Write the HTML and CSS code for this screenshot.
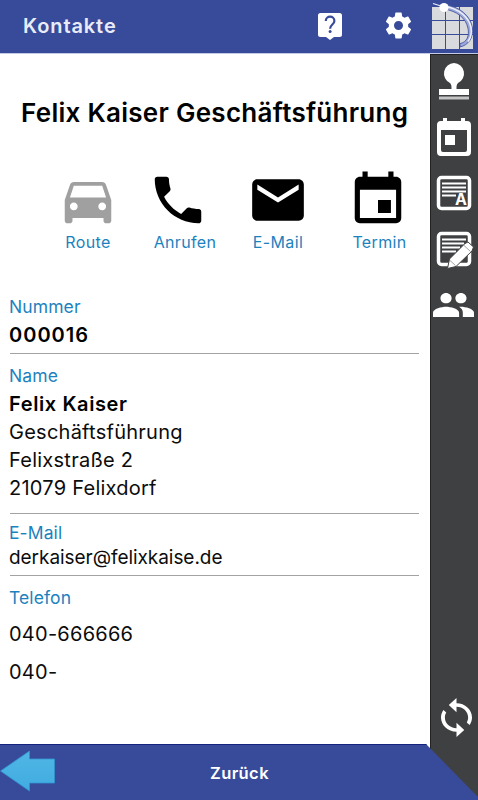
FILE: index.html
```html
<!DOCTYPE html>
<html lang="de">
<head>
  <meta charset="UTF-8" />
  <meta name="viewport" content="width=device-width, initial-scale=1" />
  <title>Kontakte</title>
  <link rel="stylesheet" href="styles.css">
</head>
<body>
  <div class="app">
    <header class="topbar">
      <span class="topbar-title">Kontakte</span>
      <svg class="icon-help" viewBox="0 0 24 27">
        <path fill="#fff" d="M2.500 0h19A2.500 2.500 0 0 1 24 2.500v19a2.500 2.500 0 0 1-2.500 2.500H16l-4 3-4-3H2.500A2.500 2.500 0 0 1 0 21.500v-19A2.500 2.500 0 0 1 2.500 0z"/>
        <path fill="none" stroke="#384b9b" stroke-width="2.200" d="M7.800 8c0-5.800 8.600-5.800 8.600 0 0 3.500-4.300 3.700-4.300 7.700"/>
        <circle cx="12.100" cy="18.600" r="1.500" fill="#384b9b"/>
      </svg>
      <svg class="icon-gear" viewBox="0 0 24 24">
        <path fill="#fff" d="M19.430 12.980c.04-.32.07-.64.07-.98s-.03-.66-.07-.98l2.110-1.650c.19-.15.24-.42.12-.64l-2-3.460c-.12-.22-.39-.3-.61-.22l-2.490 1c-.52-.4-1.080-.73-1.690-.98l-.38-2.650C14.460 2.180 14.250 2 14 2h-4c-.25 0-.46.18-.49.42l-.38 2.650c-.61.25-1.170.59-1.690.98l-2.490-1c-.23-.09-.49 0-.61.22l-2 3.460c-.13.22-.07.49.12.64l2.110 1.650c-.04.32-.07.65-.07.98s.03.66.07.98l-2.110 1.650c-.19.15-.24.42-.12.64l2 3.460c.12.22.39.3.61.22l2.490-1c.52.4 1.080.73 1.690.98l.38 2.650c.03.24.24.42.49.42h4c.25 0 .46-.18.49-.42l.38-2.650c.61-.25 1.170-.59 1.690-.98l2.490 1c.23.09.49 0 .61-.22l2-3.460c.12-.22.07-.49-.12-.64l-2.110-1.650zM12 15.500c-1.930 0-3.500-1.570-3.500-3.500s1.570-3.500 3.500-3.500 3.500 1.570 3.500 3.500-1.570 3.500-3.500 3.500z"/>
      </svg>
      <svg class="logo" viewBox="0 0 46 50">
        <path fill="#d9dadd" d="M2 7h13v13H2zM16 7h13v13H16zM30 7h13v13H30zM2 21h13v13H2zM16 21h13v13H16zM30 21h13v13H30zM2 35h13v14H2zM16 35h13v14H16zM30 35h13v14H30z"/>
        <path fill="#9fa9d8" stroke="#384b9b" stroke-width=".8" d="M15 5c14 1 26 11 27.500 23 1 10-4 17-12.500 19v-3.500c7-1 9.500-8 8-15C36 18 27 11 14 9z"/>
        <path fill="none" stroke="#eceefa" stroke-width="1.600" d="M15 6.500c14 2 24 11 26 21 1 6 0 10-3 14"/>
        <path stroke="#eceefa" stroke-width="1.200" d="M3 3.500l11 3.500"/>
        <circle cx="14" cy="7.500" r="4.600" fill="#fff"/>
      </svg>
    </header>

    <main class="content">
      <h1>Felix Kaiser Geschäftsführung</h1>

      <div class="actions">
        <div class="action route">
          <svg viewBox="0 0 24 24"><path d="M18.920 6.010C18.720 5.420 18.160 5 17.500 5h-11c-.66 0-1.210.42-1.420 1.010L3 12v8c0 .55.45 1 1 1h1c.55 0 1-.45 1-1v-1h12v1c0 .55.45 1 1 1h1c.55 0 1-.45 1-1v-8l-2.080-5.990zM6.500 16c-.83 0-1.500-.67-1.500-1.500S5.670 13 6.500 13s1.500.67 1.500 1.500S7.330 16 6.500 16zm11 0c-.83 0-1.500-.67-1.500-1.500s.67-1.500 1.500-1.500 1.500.67 1.500 1.500-.67 1.500-1.500 1.500zM5 11l1.500-4.500h11L19 11H5z"/></svg>
          <span>Route</span>
        </div>
        <div class="action call">
          <svg viewBox="0 0 24 24"><path d="M6.620 10.790c1.440 2.830 3.760 5.140 6.590 6.590l2.200-2.200c.27-.27.67-.36 1.020-.24 1.120.37 2.330.57 3.570.57.55 0 1 .45 1 1V20c0 .55-.45 1-1 1-9.390 0-17-7.610-17-17 0-.55.45-1 1-1h3.500c.55 0 1 .45 1 1 0 1.250.2 2.450.57 3.570.11.35.03.74-.25 1.020l-2.200 2.200z"/></svg>
          <span>Anrufen</span>
        </div>
        <div class="action mail">
          <svg viewBox="0 0 24 24"><path d="M20 4H4c-1.100 0-1.990.9-1.990 2L2 18c0 1.100.9 2 2 2h16c1.100 0 2-.9 2-2V6c0-1.100-.9-2-2-2zm0 4l-8 5-8-5V6l8 5 8-5v2z"/></svg>
          <span>E-Mail</span>
        </div>
        <div class="action date">
          <svg viewBox="0 0 24 24"><path d="M17 12h-5v5h5v-5zM16 1v2H8V1H6v2H5c-1.110 0-1.990.9-1.990 2L3 19c0 1.100.89 2 2 2h14c1.100 0 2-.9 2-2V5c0-1.100-.9-2-2-2h-1V1h-2zm3 18H5V8h14v11z"/></svg>
          <span>Termin</span>
        </div>
      </div>

      <section class="field number">
        <h2>Nummer</h2>
        <p class="strong">000016</p>
      </section>
      <section class="field name">
        <h2>Name</h2>
        <p class="strong">Felix Kaiser</p>
        <p>Geschäftsführung</p>
        <p>Felixstraße 2</p>
        <p>21079 Felixdorf</p>
      </section>
      <section class="field email">
        <h2>E-Mail</h2>
        <p>derkaiser@felixkaise.de</p>
      </section>
      <section class="field phone">
        <h2>Telefon</h2>
        <p>040-666666</p>
        <p>040-</p>
      </section>
    </main>

    <nav class="sidebar">
      <svg class="stamp" viewBox="0 0 34 40">
        <path fill="#fff" d="M17 1a10.500 10.500 0 0 1 4 20c-1.500 1.500-1.500 3-1.500 6H32v6H2v-6h12.500c0-3 0-4.500-1.500-6A10.500 10.500 0 0 1 17 1z"/>
        <path fill="#c4c4c4" d="M2 34.500h30v3H2z"/>
      </svg>
      <svg class="calendar" viewBox="0 0 36 40">
        <path fill="#fff" fill-rule="evenodd" d="M7 1h4v3h14V1h4v3h2a4 4 0 0 1 4 4v27a4 4 0 0 1-4 4H5a4 4 0 0 1-4-4V8a4 4 0 0 1 4-4h2zM5 13v20a2 2 0 0 0 2 2h22a2 2 0 0 0 2-2V13zM9 18h10v10H9z"/>
      </svg>
      <svg class="note" viewBox="0 0 36 36">
        <rect x="2.500" y="2.500" width="31" height="31" rx="3" fill="none" stroke="#fff" stroke-width="3.500"/>
        <path fill="none" stroke="#fff" stroke-width="1.800" d="M6 8.500h24M6 12.500h24M6 16.500h24M6 20.500h14"/>
        <text x="25" y="30" text-anchor="middle" class="note-letter">A</text>
      </svg>
      <svg class="edit" viewBox="0 0 38 39">
        <rect x="2.500" y="2.500" width="31" height="31" rx="3" fill="none" stroke="#fff" stroke-width="3.500"/>
        <path fill="none" stroke="#fff" stroke-width="1.800" d="M6 8.500h24M6 12.500h22M6 16.500h18M6 20.500h14"/>
        <path fill="#fff" stroke="#3f4042" stroke-width="1" d="M11.500 37.500l2-9.500L29 12.500l3-1.500 5.500 5-1.500 4-16 15.500z"/>
        <path stroke="#8a8a8c" stroke-width=".8" d="M28 14.500l6.500 6M14 29.500l5.500 5"/>
      </svg>
      <svg class="people" viewBox="1 5 22 14" preserveAspectRatio="none">
        <path fill="#fff" d="M16 11c1.660 0 2.990-1.340 2.990-3S17.660 5 16 5c-1.660 0-3 1.340-3 3s1.340 3 3 3zm-8 0c1.660 0 2.990-1.340 2.990-3S9.660 5 8 5C6.340 5 5 6.340 5 8s1.340 3 3 3zm0 2c-2.330 0-7 1.170-7 3.500V19h14v-2.500c0-2.330-4.670-3.500-7-3.500zm8 0c-.29 0-.62.02-.97.05 1.160.84 1.970 1.970 1.970 3.450V19h6v-2.500c0-2.330-4.670-3.500-7-3.500z"/>
      </svg>
      <svg class="sync" viewBox="4 1 16 22" preserveAspectRatio="none">
        <path fill="#fff" d="M12 4V1L8 5l4 4V6c3.310 0 6 2.690 6 6 0 1.010-.25 1.970-.7 2.800l1.460 1.460C19.540 15.030 20 13.570 20 12c0-4.420-3.580-8-8-8zm0 14c-3.310 0-6-2.690-6-6 0-1.010.25-1.970.7-2.800L5.240 7.740C4.460 8.970 4 10.430 4 12c0 4.420 3.580 8 8 8v3l4-4-4-4v3z"/>
      </svg>
    </nav>

    <footer class="bottombar">
      <svg class="back" viewBox="0 0 56 42">
        <defs>
          <linearGradient id="arrow" x1="0" y1="0" x2="0" y2="1">
            <stop offset="0" stop-color="#50b6e6"/>
            <stop offset="1" stop-color="#41abe0"/>
          </linearGradient>
        </defs>
        <path fill="url(#arrow)" stroke="#3094cf" stroke-width=".8" d="M.5 21L29.500 1v8H54.500v24H29.500v8z"/>
      </svg>
      <span>Zurück</span>
    </footer>
  </div>
</body>
</html>
```
FILE: styles.css
```css
* {
  box-sizing: border-box;
}

body {
  margin: 0;
  background: #fff;
  font-family: Inter, "Liberation Sans", sans-serif;
  color: #0c0c0c;
}

svg {
  display: block;
  flex: none;
}

.app {
  display: grid;
  grid-template-columns: 430px 1fr;
  grid-template-rows: 54px 1fr 56px;
  width: 478px;
  height: 800px;
  overflow: hidden;
}

.topbar {
  grid-column: 1 / 3;
  display: flex;
  align-items: flex-start;
  background: #384b9b;
  border-bottom: 1px solid #c3cae8;
}

.topbar-title {
  width: 318px;
  padding: 14px 0 0 23px;
  font-size: 20px;
  line-height: 25px;
  font-weight: 600;
  letter-spacing: 0.9px;
  color: #e9ebf8;
}

.icon-help {
  width: 24px;
  height: 27px;
  margin-top: 13px;
}

.icon-gear {
  width: 31px;
  height: 31px;
  margin: 10px 0 0 41px;
}

.logo {
  width: 46px;
  height: 50px;
  margin-left: 16px;
}

.content {
  grid-column: 1;
  grid-row: 2;
}

h1 {
  margin: 42px 0 0 21px;
  font-size: 26px;
  line-height: 34px;
  font-weight: 600;
  letter-spacing: 0.28px;
  white-space: nowrap;
  color: #000;
}

.actions {
  display: grid;
  grid-template-columns: 90px 100px 100px;
  grid-auto-columns: 62px;
  grid-auto-flow: column;
  justify-items: start;
  margin: 39px 0 0 57px;
}

.action {
  display: flex;
  flex-direction: column;
  align-items: center;
  width: 62px;
  font-size: 16px;
  line-height: 22px;
  letter-spacing: 0.35px;
  color: #1c82be;
}

.action svg {
  width: 62px;
  height: 62px;
  fill: #000;
}

.route svg {
  fill: #a0a0a0;
}

.call span {
  margin-left: 14px;
}

.date span {
  margin-left: 3px;
}

.field {
  width: 409px;
  margin-left: 10px;
  border-bottom: 1px solid #a3a3a6;
}

.field h2 {
  margin: 0 0 0 -1px;
  font-size: 17.500px;
  line-height: 24px;
  font-weight: 400;
  letter-spacing: 0.1px;
  color: #1c82be;
}

.field p {
  margin: 0 0 0 -1px;
  font-size: 20px;
  line-height: 28px;
  letter-spacing: 0.25px;
}

.field .strong {
  font-weight: 600;
  letter-spacing: 0.6px;
  color: #000;
}

.field.number .strong {
  letter-spacing: 1px;
}

.number {
  height: 59px;
  margin-top: 42px;
}

.number h2 {
  margin-bottom: 2px;
}

.name {
  height: 160px;
  padding-top: 10px;
}

.name h2 {
  margin-bottom: 2px;
}

.email {
  height: 62px;
  padding-top: 7px;
}

.field.email p {
  font-size: 19px;
  line-height: 26px;
  letter-spacing: -0.05px;
}

.phone {
  padding-top: 10px;
  border-bottom: 0;
}

.phone p {
  line-height: 38px;
}

.phone h2 {
  margin-bottom: 5px;
}

.sidebar {
  grid-column: 2;
  grid-row: 2 / 4;
  display: flex;
  flex-direction: column;
  background: #3f4042;
  border-left: 1px solid #222;
  border-top: 1px solid #222;
}

.stamp {
  width: 34px;
  height: 40px;
  margin: 7px 0 0 6px;
}

.calendar {
  width: 36px;
  height: 40px;
  margin: 15px 0 0 5px;
}

.note {
  width: 36px;
  height: 36px;
  margin: 18px 0 0 5px;
}

.note-letter {
  font-size: 16px;
  font-weight: 700;
  fill: #fff;
}

.edit {
  width: 38px;
  height: 39px;
  margin: 20px 0 0 5px;
}

.people {
  width: 41px;
  height: 24px;
  margin: 23px 0 0 2px;
}

.sync {
  width: 31px;
  height: 39px;
  margin: 381px 0 0 10px;
}

.bottombar {
  grid-column: 1 / 3;
  grid-row: 3;
  display: flex;
  align-items: center;
  background: #384b9b;
  border-top: 1px solid #16237e;
  clip-path: polygon(0 0, 426px 0, 478px 53px, 478px 56px, 0 56px);
}

.back {
  width: 56px;
  height: 42px;
  margin-top: -4px;
}

.bottombar span {
  margin-left: 154px;
  font-size: 16.500px;
  font-weight: 600;
  letter-spacing: 0.4px;
  color: #fff;
}
```
